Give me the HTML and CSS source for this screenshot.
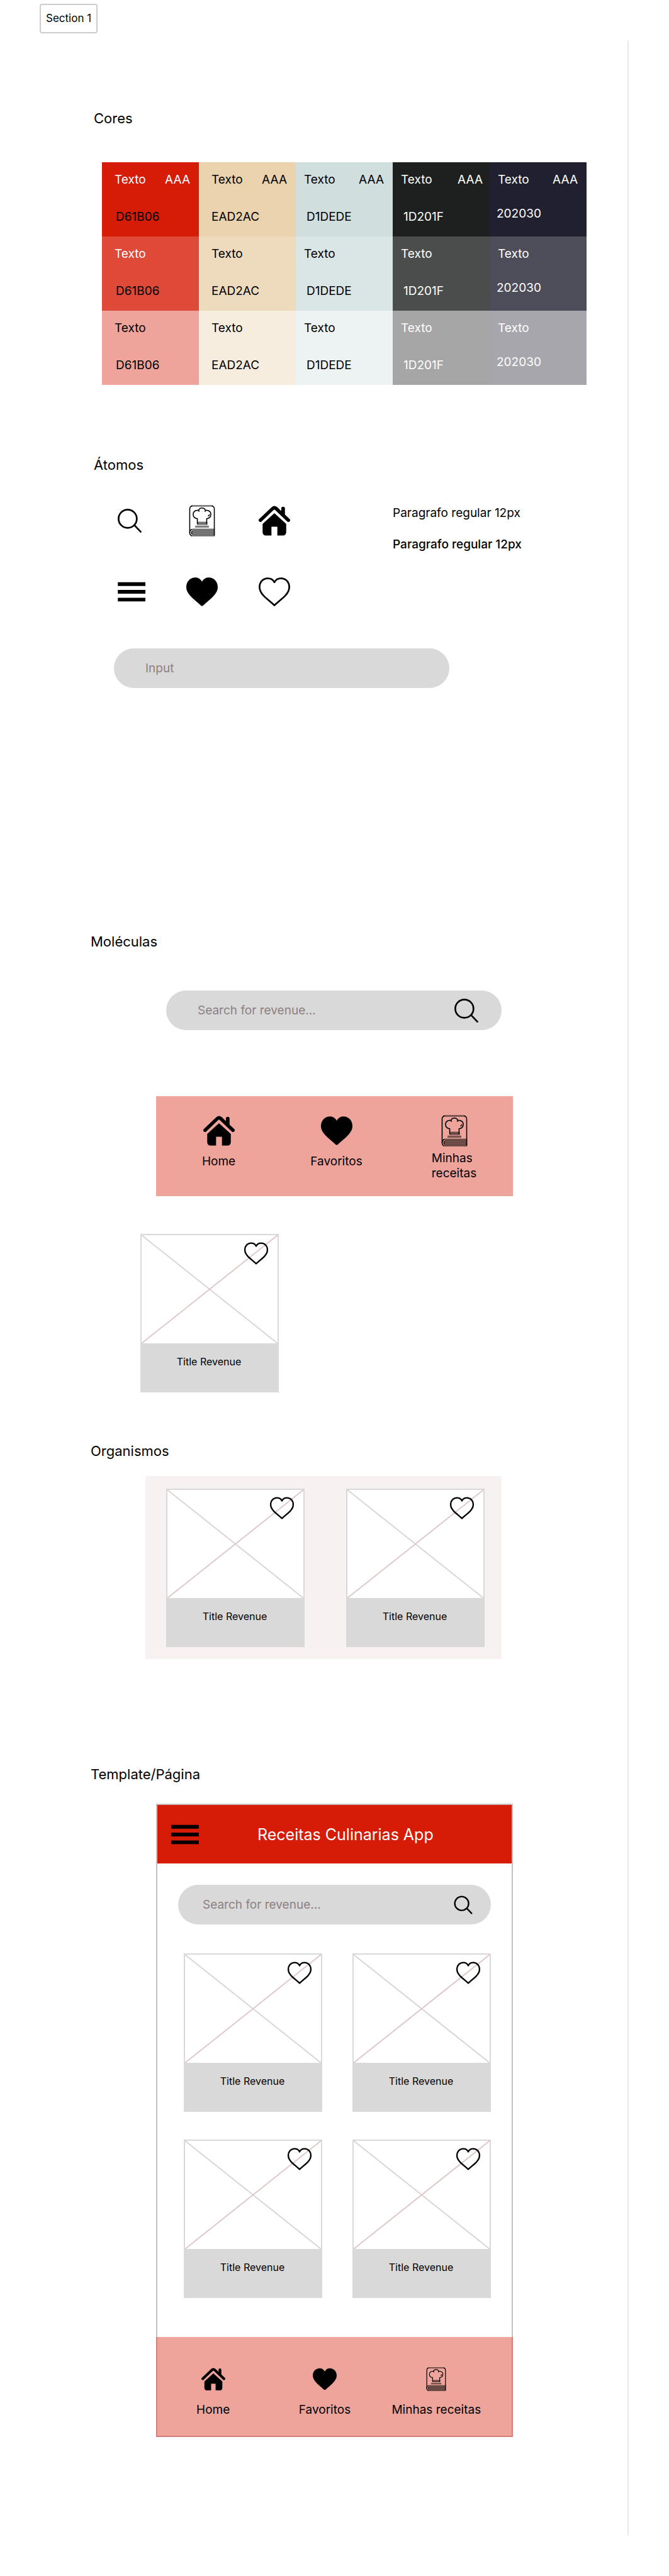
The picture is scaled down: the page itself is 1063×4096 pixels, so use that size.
FILE: index.html
```html
<!DOCTYPE html>
<html lang="pt-BR">
<head>
<meta charset="utf-8">
<meta name="viewport" content="width=device-width, initial-scale=1">
<title>Receitas Culinarias App - Design System</title>
<link rel="stylesheet" href="styles.css">
</head>
<body>
<svg class="sprite" aria-hidden="true">
  <symbol id="i-search" viewBox="0 0 64 64">
    <g fill="none" stroke="#000" stroke-linecap="round"><circle cx="28" cy="28" r="18.5"/><path d="M42 41.5 54.5 54.5"/></g>
  </symbol>
  <symbol id="i-menu" viewBox="0 0 64 64"><path d="M8 12.5h56v7.5H8zM8 28.3h56v7.5H8zM8 44h56v7.5H8z"/></symbol>
  <symbol id="i-home" viewBox="0 0 64 64">
    <path d="M3.500 31 28.500 7.200Q32 4 35.500 7.200L60.500 31" fill="none" stroke="#000" stroke-width="7" stroke-linecap="round"/>
    <path d="M46 15V7q0-3.500 3.700-3.500T53.400 7v15z"/>
    <path d="M32 16.500 56 38.500V55q0 7-7 7H38V44H26v18H15q-7 0-7-7V38.500z"/>
  </symbol>
  <symbol id="i-heart-full" viewBox="0 0 64 64">
    <path d="M32 11.500C29 6 24.500 3 18.500 3 7.500 3 0 11.500 0 22.500 0 30 4 36 9.500 41.500 16 48 22 53 30 60q2 1.500 4 0C42 53 48 48 54.500 41.500 60 36 64 30 64 22.500 64 11.500 56.500 3 45.500 3 39.500 3 35 6 32 11.500z"/>
  </symbol>
  <symbol id="i-heart" viewBox="0 0 64 64">
    <path d="M32 12.500C29.500 7.500 24.500 4.500 18.500 4.500 8.500 4.500 1.800 12.500 1.800 22.500c0 7 3.200 12.500 8.700 18C17 47 24 52 32 59.500 40 52 47 47 53.500 40.500c5.500-5.500 8.700-11 8.700-18 0-10-6.700-18-16.700-18-6 0-11 3-13.500 8z" fill="none" stroke="#000" stroke-linejoin="round"/>
  </symbol>
  <symbol id="i-book" viewBox="0 0 64 64">
    <g fill="none" stroke="#000" stroke-width="2">
      <path d="M7 58V8q0-5 5-6.500M52 1.500Q57 3 57 8v54"/>
      <path d="M7 57q0-7 5-7.500M7 56q0 6 5 7M12 53q-2.500 3.500 0 7"/>
      <path d="M22.500 39V28Q14 27 14 19q0-8 10-8.500l2.500 3M25 12q1-6 7-6t7 6M37.500 13.500l2.500-3q10 .500 10 8.500 0 8-8.500 9v11M44.500 23l3-4"/>
    </g>
    <g opacity=".5"><path d="M11 0h42v3.500H11zM22 34h21v6.500H22zM18 42h28v4H18zM12 48h46v16H12z"/></g>
    <path d="M22 37.300h21M13 51.500h44M13 56h44M13 60.500h44" stroke="#000" stroke-opacity=".12" fill="none"/>
  </symbol>
</svg>

<p class="tag">Section 1</p>

<main class="board">
  <section class="block block--colors">
    <h2>Cores</h2>
    <div class="palette">
      <div class="swatch red s1 light"><div class="top"><span>Texto</span><span>AAA</span></div><span class="code dark">D61B06</span></div>
      <div class="swatch sand s1"><div class="top"><span>Texto</span><span>AAA</span></div><span class="code">EAD2AC</span></div>
      <div class="swatch mist s1"><div class="top"><span>Texto</span><span>AAA</span></div><span class="code">D1DEDE</span></div>
      <div class="swatch coal s1 light"><div class="top"><span>Texto</span><span>AAA</span></div><span class="code">1D201F</span></div>
      <div class="swatch navy s1 light"><div class="top"><span>Texto</span><span>AAA</span></div><span class="code">202030</span></div>
      <div class="swatch red s2 light"><div class="top"><span>Texto</span></div><span class="code dark">D61B06</span></div>
      <div class="swatch sand s2"><div class="top"><span>Texto</span></div><span class="code">EAD2AC</span></div>
      <div class="swatch mist s2"><div class="top"><span>Texto</span></div><span class="code">D1DEDE</span></div>
      <div class="swatch coal s2 light"><div class="top"><span>Texto</span></div><span class="code">1D201F</span></div>
      <div class="swatch navy s2 light"><div class="top"><span>Texto</span></div><span class="code">202030</span></div>
      <div class="swatch red s3"><div class="top"><span>Texto</span></div><span class="code">D61B06</span></div>
      <div class="swatch sand s3"><div class="top"><span>Texto</span></div><span class="code">EAD2AC</span></div>
      <div class="swatch mist s3"><div class="top"><span>Texto</span></div><span class="code">D1DEDE</span></div>
      <div class="swatch coal s3 light"><div class="top"><span>Texto</span></div><span class="code">1D201F</span></div>
      <div class="swatch navy s3 light"><div class="top"><span>Texto</span></div><span class="code">202030</span></div>
    </div>
  </section>

  <section class="block block--atoms">
    <h2>Átomos</h2>
    <div class="atoms">
      <div class="icon-grid">
        <svg class="icon"><use href="#i-search"/></svg>
        <svg class="icon"><use href="#i-book"/></svg>
        <svg class="icon"><use href="#i-home"/></svg>
        <svg class="icon"><use href="#i-menu"/></svg>
        <svg class="icon"><use href="#i-heart-full"/></svg>
        <svg class="icon"><use href="#i-heart"/></svg>
      </div>
      <div class="type">
        <p>Paragrafo regular 12px</p>
        <p class="strong">Paragrafo regular 12px</p>
      </div>
    </div>
    <div class="field field--atom"><input type="text" placeholder="Input" aria-label="Input"></div>
  </section>

  <section class="block block--molecules">
    <h2>Moléculas</h2>
    <form class="field field--molecule" role="search">
      <input type="search" placeholder="Search for revenue..." aria-label="Search for revenue">
      <button type="button" aria-label="Search"><svg class="icon"><use href="#i-search"/></svg></button>
    </form>
    <nav class="nav nav--molecule" aria-label="Menu">
      <a href="#home"><svg class="icon"><use href="#i-home"/></svg><span>Home</span></a>
      <a href="#favoritos"><svg class="icon"><use href="#i-heart-full"/></svg><span>Favoritos</span></a>
      <a href="#receitas" class="two-lines"><svg class="icon"><use href="#i-book"/></svg><span>Minhas<br>receitas</span></a>
    </nav>
    <article class="card card--single">
      <div class="card-image">
        <svg class="cross" viewBox="0 0 100 100" preserveAspectRatio="none"><path class="down" d="M0 0 100 100"/><path class="up" d="M0 100 100 0"/></svg>
        <button type="button" aria-label="Favoritar"><svg class="icon icon--small"><use href="#i-heart"/></svg></button>
      </div>
      <h3>Title Revenue</h3>
    </article>
  </section>

  <section class="block block--organisms">
    <h2>Organismos</h2>
    <div class="panel">
      <article class="card">
        <div class="card-image">
          <svg class="cross" viewBox="0 0 100 100" preserveAspectRatio="none"><path class="down" d="M0 0 100 100"/><path class="up" d="M0 100 100 0"/></svg>
          <button type="button" aria-label="Favoritar"><svg class="icon icon--small"><use href="#i-heart"/></svg></button>
        </div>
        <h3>Title Revenue</h3>
      </article>
      <article class="card">
        <div class="card-image">
          <svg class="cross" viewBox="0 0 100 100" preserveAspectRatio="none"><path class="down" d="M0 0 100 100"/><path class="up" d="M0 100 100 0"/></svg>
          <button type="button" aria-label="Favoritar"><svg class="icon icon--small"><use href="#i-heart"/></svg></button>
        </div>
        <h3>Title Revenue</h3>
      </article>
    </div>
  </section>

  <section class="block block--template">
    <h2>Template/Página</h2>
    <div class="phone">
      <header class="app-bar">
        <button type="button" aria-label="Menu"><svg class="icon"><use href="#i-menu"/></svg></button>
        <h1>Receitas Culinarias App</h1>
      </header>
      <div class="app-body">
        <form class="field field--app" role="search">
          <input type="search" placeholder="Search for revenue..." aria-label="Search for revenue">
          <button type="button" aria-label="Search"><svg class="icon icon--small"><use href="#i-search"/></svg></button>
        </form>
        <div class="cards">
          <article class="card">
            <div class="card-image">
              <svg class="cross" viewBox="0 0 100 100" preserveAspectRatio="none"><path class="down" d="M0 0 100 100"/><path class="up" d="M0 100 100 0"/></svg>
              <button type="button" aria-label="Favoritar"><svg class="icon icon--small"><use href="#i-heart"/></svg></button>
            </div>
            <h3>Title Revenue</h3>
          </article>
          <article class="card">
            <div class="card-image">
              <svg class="cross" viewBox="0 0 100 100" preserveAspectRatio="none"><path class="down" d="M0 0 100 100"/><path class="up" d="M0 100 100 0"/></svg>
              <button type="button" aria-label="Favoritar"><svg class="icon icon--small"><use href="#i-heart"/></svg></button>
            </div>
            <h3>Title Revenue</h3>
          </article>
          <article class="card">
            <div class="card-image">
              <svg class="cross" viewBox="0 0 100 100" preserveAspectRatio="none"><path class="down" d="M0 0 100 100"/><path class="up" d="M0 100 100 0"/></svg>
              <button type="button" aria-label="Favoritar"><svg class="icon icon--small"><use href="#i-heart"/></svg></button>
            </div>
            <h3>Title Revenue</h3>
          </article>
          <article class="card">
            <div class="card-image">
              <svg class="cross" viewBox="0 0 100 100" preserveAspectRatio="none"><path class="down" d="M0 0 100 100"/><path class="up" d="M0 100 100 0"/></svg>
              <button type="button" aria-label="Favoritar"><svg class="icon icon--small"><use href="#i-heart"/></svg></button>
            </div>
            <h3>Title Revenue</h3>
          </article>
        </div>
      </div>
      <nav class="nav nav--app" aria-label="Menu do app">
        <a href="#home"><svg class="icon icon--small"><use href="#i-home"/></svg><span>Home</span></a>
        <a href="#favoritos"><svg class="icon icon--small"><use href="#i-heart-full"/></svg><span>Favoritos</span></a>
        <a href="#receitas"><svg class="icon icon--small"><use href="#i-book"/></svg><span>Minhas receitas</span></a>
      </nav>
    </div>
  </section>
</main>
</body>
</html>
```
FILE: styles.css
```css
* { box-sizing: border-box; }

body {
  margin: 0;
  padding: 6px 0 64px;
  display: flow-root;
  background: #fff;
  color: #000;
  font: 400 19px/24px Inter, "Liberation Sans", sans-serif;
}

h1, h2, h3, p { margin: 0; font-weight: 400; }

button {
  padding: 0;
  border: 0;
  background: none;
  cursor: pointer;
}

.sprite { position: absolute; width: 0; height: 0; }

.icon { display: block; flex: none; width: 50px; height: 50px; stroke-width: 3.5; }
.icon--small { width: 38px; height: 38px; stroke-width: 4; }
.icon path[fill="none"], .icon circle { stroke-width: inherit; }

.tag {
  width: max-content;
  margin-left: 63px;
  padding: 9px 8px 10px;
  border: 2px solid #ccc;
  border-radius: 4px;
  font-size: 17px;
}

/* Board and sections */
.board {
  margin: 11px 64px 0 0;
  padding: 110px 65px 157px 144px;
  border-right: 2px solid #e8e8e8;
  border-radius: 0 2px 2px 0;
}

.block h2 { font-size: 22px; line-height: 28px; }
.block--colors h2, .block--atoms h2 { margin-left: 5px; }
.block--atoms { margin-top: 113px; }
.block--molecules { margin-top: 389px; }
.block--organisms { margin-top: 79px; }
.block--template { margin-top: 169px; }

/* Palette */
.palette {
  display: grid;
  grid-template-columns: repeat(5, 1fr);
  margin: 56px 0 0 18px;
}

.swatch {
  display: flex;
  flex-direction: column;
  gap: 35px;
  min-height: 118px;
  padding-top: 16px;
  stroke-width: 0;
}

.top { display: flex; justify-content: space-between; padding: 0 14px 0 13px; }
.code { padding-left: 17px; }
.light { color: #fff; }
.dark { color: #000; }
.red .top, .sand .top { padding-left: 20px; }
.red .code { padding-left: 22px; }
.sand .code { padding-left: 20px; }
.coal .top { padding-right: 11px; }
.navy .code { padding-left: 11px; }
.navy { gap: 30px; }

.red.s1 { background: #d61b06; }
.red.s2 { background: #df4938; }
.red.s3 { background: #eea49b; }
.sand.s1 { background: #ead2ac; }
.sand.s2 { background: #eedbbd; }
.sand.s3 { background: #f7edde; }
.mist.s1 { background: #d1dede; }
.mist.s2 { background: #dae5e5; }
.mist.s3 { background: #edf2f2; }
.coal.s1 { background: #1d201f; }
.coal.s2 { background: #4a4d4c; }
.coal.s3 { background: #a5a6a5; }
.navy.s1 { background: #202030; }
.navy.s2 { background: #4d4d59; }
.navy.s3 { background: #a6a6ac; }

/* Atoms */
.atoms { display: flex; gap: 163px; margin: 50px 0 65px 37px; }
.icon-grid { display: grid; grid-template-columns: repeat(3, 50px); gap: 63px 65px; }
.type { display: flex; flex-direction: column; gap: 26px; padding-top: 1px; }
.strong { font-weight: 500; }

/* Text field */
.field {
  display: flex;
  align-items: center;
  height: 63px;
  max-width: 533px;
  padding: 0 31px 0 50px;
  border-radius: 32px;
  background: #d9d9d9;
}

.field input {
  flex: 1;
  min-width: 0;
  padding: 0;
  border: 0;
  outline: 0;
  appearance: none;
  background: none;
  color: #000;
  font: inherit;
}

.field input::placeholder { color: #8d8080; opacity: 1; }
.field--atom { margin-left: 37px; }
.field--molecule { margin: 64px 0 0 120px; }
.field--app { max-width: none; padding: 0 25px 0 39px; }

/* Bottom navigation */
.nav {
  display: grid;
  grid-template-columns: repeat(3, 1fr);
  min-height: 159px;
  background: #eea49b;
}

.nav a {
  display: flex;
  flex-direction: column;
  align-items: center;
  gap: 12px;
  color: #000;
  text-decoration: none;
  white-space: nowrap;
}

.nav .two-lines { gap: 7px; }
.nav--molecule { max-width: 567px; margin: 105px 0 60px 104px; padding: 30px 0 0 6px; }

.nav--app {
  margin: 62px -2px -2px;
  padding: 48px 31px 0 0;
  border: solid #d47f78;
  border-width: 0 2px 2px;
}

.nav--app a { gap: 18px; }

/* Recipe card */
.card { width: 220px; background: #d9d9d9; }
.card--single { margin-left: 79px; }

.card-image {
  position: relative;
  aspect-ratio: 220 / 174;
  border: 2px solid #d9d9d9;
  border-bottom: 0;
  background: #fff;
}

.card-image button { position: absolute; top: 10px; right: 15px; }
.cross { display: block; width: 100%; height: 100%; }
.cross path { fill: none; stroke-width: 2; vector-effect: non-scaling-stroke; }
.cross .down { stroke: #dcd5d5; }
.cross .up { stroke: #dec9c9; }

.card h3 {
  padding: 19px 2px 39px 0;
  font-size: 16px;
  line-height: 20px;
  text-align: center;
}

.panel {
  display: flex;
  gap: 66px;
  max-width: 566px;
  margin: 26px 0 0 87px;
  padding: 20px 0 19px 33px;
  background: #f7f1f1;
}

/* App screen */
.phone {
  max-width: 567px;
  margin: 33px 0 0 104px;
  border: 2px solid #c8c0c0;
}

.app-bar {
  display: flex;
  align-items: center;
  gap: 93px;
  min-height: 93px;
  padding-left: 16px;
  background: #d61b06;
  color: #fff;
}

.app-bar h1 { font-size: 25px; line-height: 30px; }
.app-body { padding: 34px 33px 0; }

.cards {
  display: grid;
  grid-template-columns: repeat(2, 220px);
  justify-content: end;
  gap: 44px 48px;
  margin-top: 46px;
}
```
